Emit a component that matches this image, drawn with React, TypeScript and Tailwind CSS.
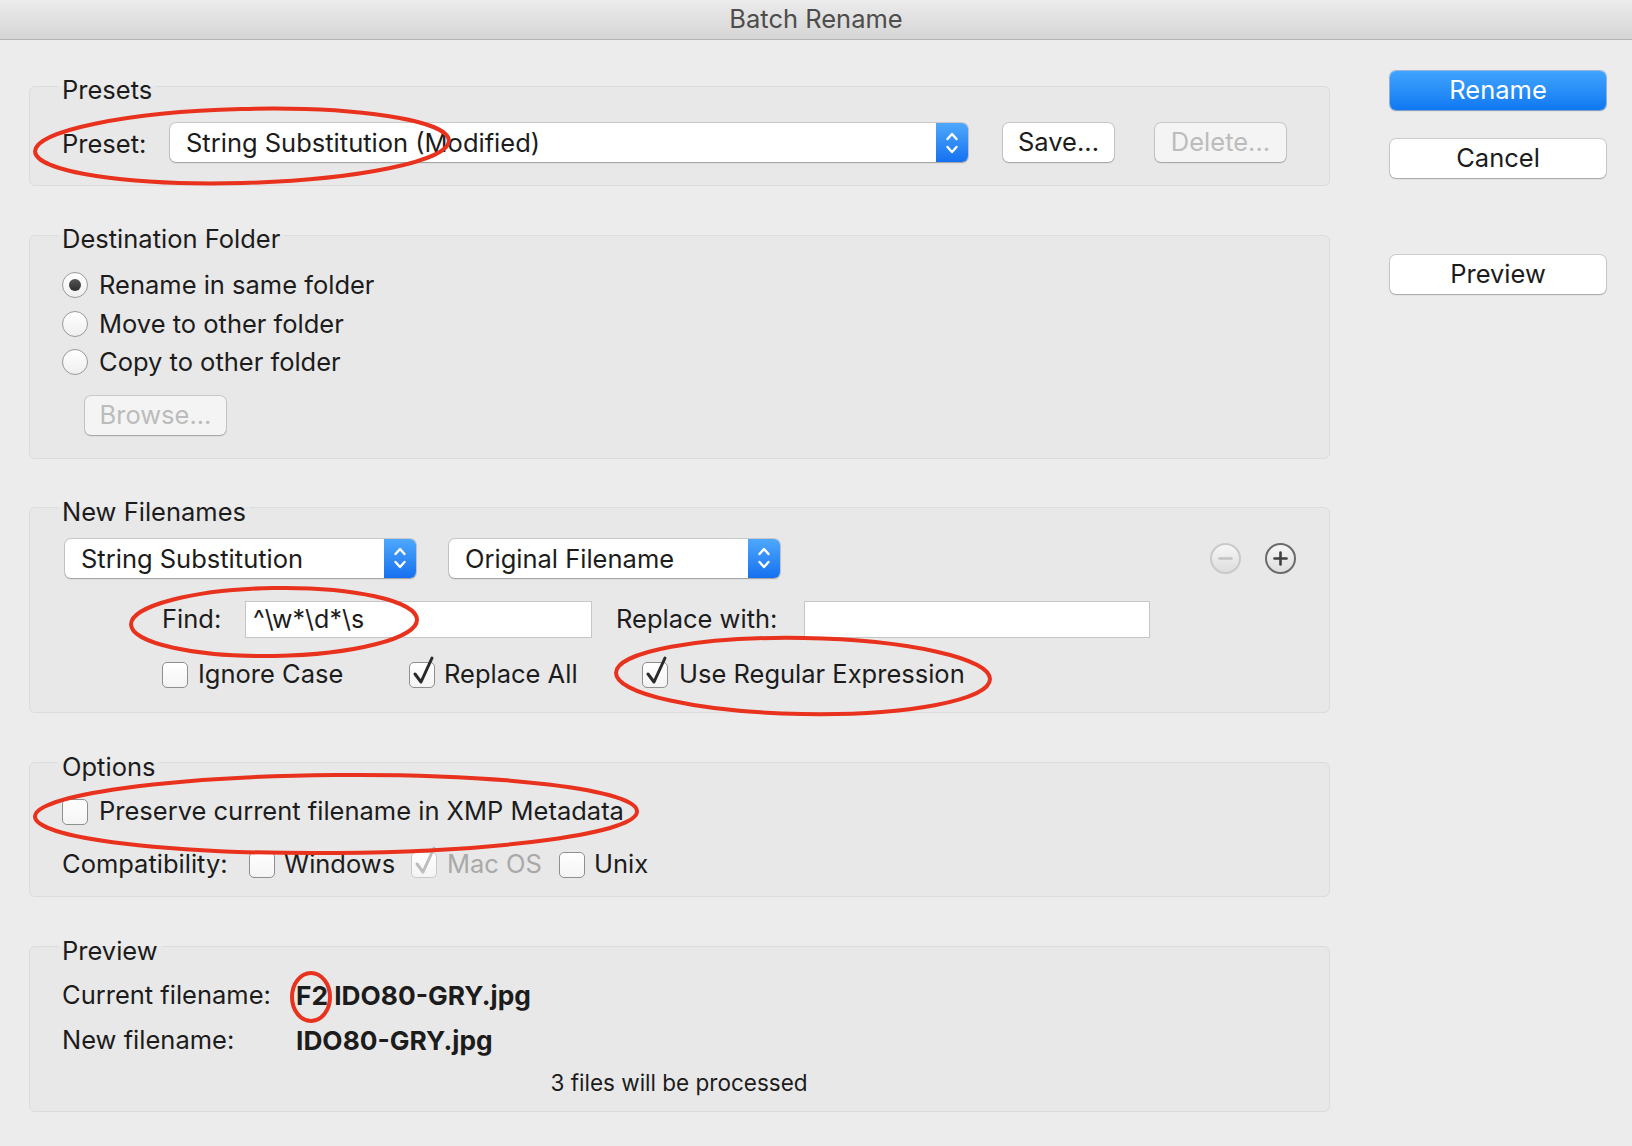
import React from "react";

function CheckBox({ checked = false, disabled = false }: { checked?: boolean; disabled?: boolean }) {
  return (
    <div
      className={`relative h-[26px] w-[26px] shrink-0 rounded-[5px] border bg-gradient-to-b from-white to-[#f4f4f4] ${
        disabled ? "border-[#c9c9c9]" : "border-[#8f8f8f]"
      }`}
    >
      {checked && (
        <svg className="absolute -top-[7px] left-[1px] h-[31px] w-[26px]" viewBox="0 0 26 31" fill="none">
          <path
            d="M4 18 L10 26 L21 2"
            stroke={disabled ? "#bdbdbd" : "#2a2a2a"}
            strokeWidth="3"
            strokeLinecap="round"
            strokeLinejoin="round"
          />
        </svg>
      )}
    </div>
  );
}

function Radio({ selected = false }: { selected?: boolean }) {
  return (
    <div className="flex h-[26px] w-[26px] shrink-0 items-center justify-center rounded-full border-[1.5px] border-[#9a9a9a] bg-gradient-to-b from-white to-[#efefef]">
      {selected && <div className="h-[12px] w-[12px] rounded-full bg-gradient-to-b from-[#555] to-[#2e2e2e]" />}
    </div>
  );
}

function Stepper() {
  return (
    <div className="flex h-full w-[32px] shrink-0 items-center justify-center rounded-r-[6px] bg-gradient-to-b from-[#4ea8fc] to-[#1470f0]">
      <svg width="16" height="26" viewBox="0 0 16 26" fill="none">
        <path d="M3.5 9 L8 4 L12.5 9" stroke="white" strokeWidth="2.4" strokeLinecap="round" strokeLinejoin="round" />
        <path d="M3.5 17 L8 22 L12.5 17" stroke="white" strokeWidth="2.4" strokeLinecap="round" strokeLinejoin="round" />
      </svg>
    </div>
  );
}

function PopUp({ label, className }: { label: string; className: string }) {
  return (
    <div
      className={`flex h-[39px] items-center rounded-[6px] bg-white shadow-[0_0_0_1px_rgba(0,0,0,0.13),0_1px_1.5px_rgba(0,0,0,0.22)] ${className}`}
    >
      <div className="flex-1 truncate pl-[16px] pt-[2px] text-[25.5px] text-[#1c1c1c]">{label}</div>
      <Stepper />
    </div>
  );
}

function PushButton({
  label,
  disabled = false,
  className,
}: {
  label: string;
  disabled?: boolean;
  className: string;
}) {
  return (
    <div
      className={`flex h-[39px] items-center justify-center rounded-[6px] text-[25.5px] shadow-[0_0_0_1px_rgba(0,0,0,0.13),0_1px_1.5px_rgba(0,0,0,0.2)] ${
        disabled ? "bg-[#f4f4f4] text-[#bcbcbc]" : "bg-white text-[#1c1c1c]"
      } ${className}`}
    >
      {label}
    </div>
  );
}

function RoundButton({ plus = false }: { plus?: boolean }) {
  return (
    <div
      className={`flex h-[31px] w-[31px] items-center justify-center rounded-full border-[2px] bg-gradient-to-b from-[#f6f6f6] to-[#dedede] ${
        plus ? "border-[#6b6b6b]" : "border-[#c9c9c9]"
      }`}
    >
      <svg width="17" height="17" viewBox="0 0 17 17">
        <path d="M2.5 8.5 H14.5" stroke={plus ? "#404040" : "#c2c2c2"} strokeWidth="2.6" strokeLinecap="round" />
        {plus && <path d="M8.5 2.5 V14.5" stroke="#404040" strokeWidth="2.6" strokeLinecap="round" />}
      </svg>
    </div>
  );
}

function Group({ title, className, children }: { title: string; className: string; children: React.ReactNode }) {
  return (
    <fieldset className={`rounded-[6px] border border-[#dcdcdc] bg-[#e8e8e8] pl-[32px] pr-[33px] ${className}`}>
      <legend className="-ml-[4px] px-[4px] text-[25.5px] leading-[30px] text-[#1c1c1c]">
        <span className="relative top-[4px]">{title}</span>
      </legend>
      {children}
    </fieldset>
  );
}

export default function App() {
  return (
    <div className="relative h-[1146px] w-[1632px] overflow-hidden bg-[#ececec] font-['Inter',sans-serif] text-[25.5px] text-[#1c1c1c]">
      <div className="flex h-[40px] items-center justify-center border-b border-[#b3b3b3] bg-gradient-to-b from-[#ececec] to-[#d5d5d5] text-[25.5px] text-[#4d4d4d]">
        Batch Rename
      </div>

      <div className="flex pl-[29px] pt-[31px]">
        <div className="flex w-[1301px] flex-col">
          <Group title="Presets" className="pb-[23px]">
            <div className="mt-[22px] flex h-[39px] items-center">
              <div className="w-[108px] pt-[3px]">Preset:</div>
              <PopUp label="String Substitution (Modified)" className="w-[798px]" />
              <PushButton label="Save..." className="ml-[35px] w-[111px]" />
              <PushButton label="Delete..." disabled className="ml-[41px] w-[131px]" />
            </div>
          </Group>

          <Group title="Destination Folder" className="mt-[34px] pb-[23px]">
            <div className="mt-[16px] flex flex-col">
              {[
                ["Rename in same folder", true],
                ["Move to other folder", false],
                ["Copy to other folder", false],
              ].map(([label, sel]) => (
                <div key={label as string} className="flex h-[38.5px] items-center gap-[11px]">
                  <Radio selected={sel as boolean} />
                  <span>{label as string}</span>
                </div>
              ))}
            </div>
            <PushButton label="Browse..." disabled className="ml-[23px] mt-[14px] h-[37px] w-[141px]" />
          </Group>

          <Group title="New Filenames" className="mt-[34px] pb-[22px]">
            <div className="mt-[16px] flex items-center">
              <PopUp label="String Substitution" className="ml-[3px] w-[351px]" />
              <PopUp label="Original Filename" className="ml-[33px] w-[331px]" />
              <div className="ml-auto flex items-center gap-[24px]">
                <RoundButton />
                <RoundButton plus />
              </div>
            </div>
            <div className="mt-[23px] flex h-[37px] items-center pl-[100px]">
              <div className="w-[83px]">Find:</div>
              <div className="flex h-[37px] w-[347px] items-center border border-[#c6c6c6] bg-white pl-[7px] pt-[2px] text-[25px]">
                ^\w*\d*\s
              </div>
              <div className="ml-[24px] w-[188px]">Replace with:</div>
              <div className="h-[37px] w-[346px] border border-[#c6c6c6] bg-white" />
            </div>
            <div className="mt-[22px] flex h-[30px] items-center pl-[100px]">
              <div className="flex w-[247px] items-center gap-[10px]">
                <CheckBox />
                <span>Ignore Case</span>
              </div>
              <div className="flex w-[233px] items-center gap-[9px]">
                <CheckBox checked />
                <span>Replace All</span>
              </div>
              <div className="flex items-center gap-[11px]">
                <CheckBox checked />
                <span>Use Regular Expression</span>
              </div>
            </div>
          </Group>

          <Group title="Options" className="mt-[35px] pb-[16px]">
            <div className="mt-[19px] flex h-[30px] items-center gap-[11px]">
              <CheckBox />
              <span>Preserve current filename in XMP Metadata</span>
            </div>
            <div className="mt-[23px] flex h-[30px] items-center">
              <div className="w-[187px]">Compatibility:</div>
              <div className="flex w-[162px] items-center gap-[9px]">
                <CheckBox />
                <span>Windows</span>
              </div>
              <div className="flex w-[148px] items-center gap-[10px] text-[#a9a9a9]">
                <CheckBox checked disabled />
                <span>Mac OS</span>
              </div>
              <div className="flex items-center gap-[9px]">
                <CheckBox />
                <span>Unix</span>
              </div>
            </div>
          </Group>

          <Group title="Preview" className="mt-[35px] pb-[13px]">
            <div className="mt-[17px] flex h-[34px] items-center">
              <div className="w-[234px]">Current filename:</div>
              <div className="text-[26.3px] font-bold">F2 IDO80-GRY.jpg</div>
            </div>
            <div className="mt-[11px] flex h-[34px] items-center">
              <div className="w-[234px]">New filename:</div>
              <div className="text-[26.3px] font-bold">IDO80-GRY.jpg</div>
            </div>
            <div className="mt-[10px] flex h-[30px] items-center justify-center text-[22.5px]">
              3 files will be processed
            </div>
          </Group>
        </div>

        <div className="ml-[60px] flex w-[216px] flex-col">
          <div className="flex h-[39px] items-center justify-center rounded-[6px] bg-gradient-to-b from-[#3fa4fd] to-[#0e78f2] text-white shadow-[0_0_0_1px_rgba(0,80,200,0.35),0_1px_1.5px_rgba(0,0,0,0.2)]">
            Rename
          </div>
          <PushButton label="Cancel" className="mt-[29px] w-full" />
          <PushButton label="Preview" className="mt-[77px] w-full" />
        </div>
      </div>

      <svg className="pointer-events-none absolute inset-0" width="1632" height="1146" viewBox="0 0 1632 1146" fill="none">
        <g stroke="#e8321e" strokeWidth="4">
          <ellipse cx="242" cy="146" rx="207" ry="37" transform="rotate(-1.5 242 146)" />
          <ellipse cx="274" cy="622" rx="143" ry="34" transform="rotate(-1 274 622)" />
          <ellipse cx="803" cy="676" rx="187" ry="38" transform="rotate(1 803 676)" />
          <ellipse cx="336" cy="814" rx="301" ry="39" transform="rotate(-0.5 336 814)" />
          <ellipse cx="311" cy="997" rx="19" ry="24" />
        </g>
      </svg>
    </div>
  );
}
